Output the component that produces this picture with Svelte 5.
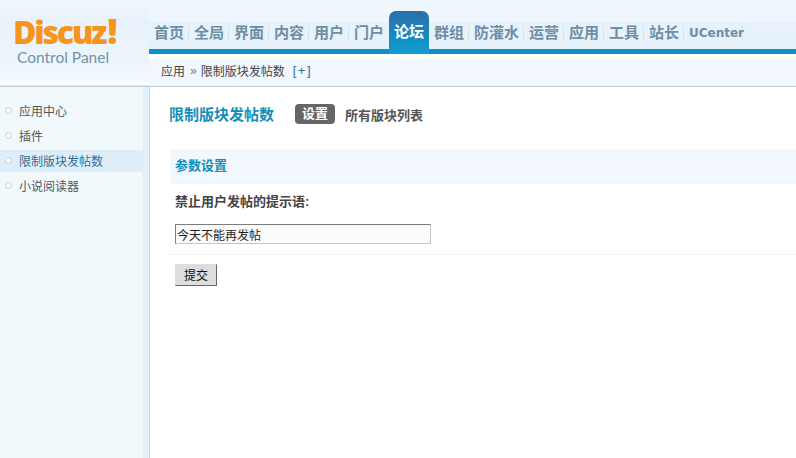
<script>
	const tabs = [
		{ label: '首页' }, { label: '全局' }, { label: '界面' }, { label: '内容' }, { label: '用户' },
		{ label: '门户' }, { label: '论坛', active: true }, { label: '群组' }, { label: '防灌水' },
		{ label: '运营' }, { label: '应用' }, { label: '工具' }, { label: '站长' }, { label: 'UCenter', latin: true }
	];
	const menu = ['应用中心', '插件', '限制版块发帖数', '小说阅读器'];
	let current = $state('限制版块发帖数');
	let notice = $state('今天不能再发帖');
</script>

<div class="page">
	<header>
		<div class="logo">
			<div class="brand">Discuz<span>!</span></div>
			<div class="sub">Control Panel</div>
		</div>
		<div class="top">
			<nav>
				{#each tabs as tab}
					<a href="#top" class:active={tab.active} class:latin={tab.latin}>{tab.label}</a>
				{/each}
			</nav>
			<div class="crumbs">
				<span>应用</span><span class="sep">»</span><span>限制版块发帖数</span><span class="plus">[+]</span>
			</div>
		</div>
	</header>

	<div class="body">
		<aside>
			<ul>
				{#each menu as item}
					<li class:on={item === current}>
						<i></i>
						<button onclick={() => (current = item)}>{item}</button>
					</li>
				{/each}
			</ul>
		</aside>

		<main>
			<div class="title">
				<h1>限制版块发帖数</h1>
				<span class="pill">设置</span>
				<span class="link">所有版块列表</span>
			</div>

			<form onsubmit={(e) => e.preventDefault()}>
				<h2>参数设置</h2>
				<label for="notice">禁止用户发帖的提示语:</label>
				<div class="field">
					<input id="notice" bind:value={notice} />
				</div>
				<div class="actions">
					<button class="submit" type="submit">提交</button>
				</div>
			</form>
		</main>
	</div>
</div>

<style>
	:global(body) {
		margin: 0;
		background: #fff;
	}

	.page {
		width: 796px;
		height: 458px;
		overflow: hidden;
		display: flex;
		flex-direction: column;
		font-family: "Liberation Sans", "Noto Sans CJK SC", sans-serif;
		font-size: 12px;
		color: #333;
	}

	header {
		display: flex;
		height: 87px;
		flex: none;
		background: #fff;
	}

	.logo {
		width: 149px;
		flex: none;
		box-sizing: border-box;
		height: 87px;
		padding: 16px 0 0 13px;
		background: linear-gradient(#f0f6fd 0, #e8f2fa 22px, #edf5fb 60px, #f3f8fd 80px, #fff 82px, #fff 85px, #bccfde 86px);
	}

	.brand {
		font-family: "Open Sans", sans-serif;
		font-weight: 800;
		font-size: 32px;
		line-height: 30px;
		height: 30px;
		letter-spacing: -2.2px;
		color: #f7941d;
	}

	.brand span {
		font-size: 36px;
		margin-left: 2px;
	}

	.sub {
		font-family: "Lato", sans-serif;
		font-size: 15.5px;
		line-height: 16px;
		margin: 3px 0 0 4px;
		color: #6f93ab;
	}

	.top {
		flex: 1;
		display: flex;
		flex-direction: column;
		min-width: 0;
	}

	nav {
		display: flex;
		align-items: flex-end;
		height: 49px;
		flex: none;
		border-bottom: 5px solid #0b93c9;
		background: linear-gradient(#f0f6fd 0, #f0f6fd 21px, #e8f2fa 22px, #e6f1fa 49px);
	}

	nav a {
		box-sizing: border-box;
		width: 40px;
		height: 16px;
		margin-bottom: 8px;
		padding-left: 5px;
		flex: none;
		font-size: 15px;
		line-height: 16px;
		font-weight: 700;
		color: #6d8fa5;
		text-decoration: none;
		border-right: 1px solid #d6e5f0;
	}

	nav a:nth-child(6) {
		border-right: 0;
	}

	nav a:nth-child(9) {
		width: 55px;
	}

	nav a.latin {
		width: 59px;
		font-family: "DejaVu Sans", sans-serif;
		font-size: 12px;
	}

	nav a.active {
		height: 43px;
		margin-bottom: -5px;
		padding-top: 13px;
		color: #fff;
		border-right: 0;
		border-radius: 7px 7px 0 0;
		background: linear-gradient(#2e6ea8, #0f93ca 75%, #1a9cd0);
	}

	.crumbs {
		margin-top: 5px;
		height: 28px;
		box-sizing: border-box;
		display: flex;
		align-items: center;
		padding: 0 0 4px 12px;
		color: #444;
		background: #f1f7fd;
		border-bottom: 1px solid #bccfde;
	}

	.sep {
		margin: 0 4px 0 5px;
		color: #6d7f8c;
	}

	.plus {
		margin-left: 8px;
		font-size: 13px;
		color: #2f6f92;
		letter-spacing: 1.5px;
	}

	.body {
		flex: 1;
		display: flex;
		min-height: 0;
	}

	aside {
		width: 143px;
		flex: none;
		background: #f2f9fd;
		border-right: 6px solid #e0eff9;
	}

	ul {
		list-style: none;
		margin: 0;
		padding: 12px 0 0;
	}

	li {
		display: flex;
		align-items: center;
		box-sizing: border-box;
		height: 25px;
		padding-bottom: 2px;
	}

	li.on {
		height: 22px;
		margin: 1px 0 2px;
		background: #deeef9;
	}

	li i {
		width: 5px;
		height: 5px;
		margin: 0 7px 0 5px;
		border: 1px solid #c5cbcf;
		border-radius: 50%;
		background: #fff;
	}

	li button {
		padding: 0;
		border: 0;
		background: none;
		font: inherit;
		color: #555;
	}

	li.on button {
		color: #2b7199;
	}

	main {
		flex: 1;
		min-width: 0;
		border-left: 1px solid #c6d8e5;
		padding: 0 0 0 20px;
		background: #fff;
	}

	.title {
		display: flex;
		align-items: center;
		height: 54px;
		box-sizing: border-box;
	}

	h1 {
		margin: -2px 21px 0 -1px;
		font-size: 15px;
		font-weight: 700;
		color: #0f8fba;
	}

	.pill {
		width: 40px;
		height: 20px;
		border-radius: 4px;
		text-align: center;
		font-size: 13px;
		line-height: 20px;
		font-weight: 700;
		color: #fff;
		background: #666;
	}

	.link {
		margin-left: 10px;
		font-size: 13px;
		font-weight: 700;
		color: #555;
	}

	form {
		margin-top: 8px;
	}

	h2 {
		margin: 0;
		height: 35px;
		padding-left: 5px;
		font-size: 13px;
		line-height: 33px;
		font-weight: 700;
		color: #0f8fba;
		background: #f2f8fd;
		border-bottom: 1px solid #eef3f8;
		box-sizing: border-box;
	}

	label {
		display: block;
		margin: 10px 0 0 5px;
		font-size: 13px;
		line-height: 16px;
		font-weight: 700;
		color: #444;
	}

	.field {
		margin-top: 14px;
		padding: 0 0 10px 5px;
		border-bottom: 1px solid #f0f2f4;
	}

	input {
		display: block;
		width: 256px;
		height: 20px;
		box-sizing: border-box;
		padding: 0 1px;
		border: 1px solid;
		border-color: #7c7c7c #c6c6c6 #c6c6c6 #7c7c7c;
		background: #fbfbfb;
		font: inherit;
		color: #222;
		outline: none;
	}

	.actions {
		padding: 9px 0 0 5px;
	}

	.submit {
		display: block;
		width: 42px;
		height: 22px;
		padding: 0 0 2px;
		border: 1px solid;
		border-color: #ddd #666 #666 #ddd;
		background: #ddd;
		font-family: inherit;
		font-size: 12px;
		color: #111;
	}
</style>
